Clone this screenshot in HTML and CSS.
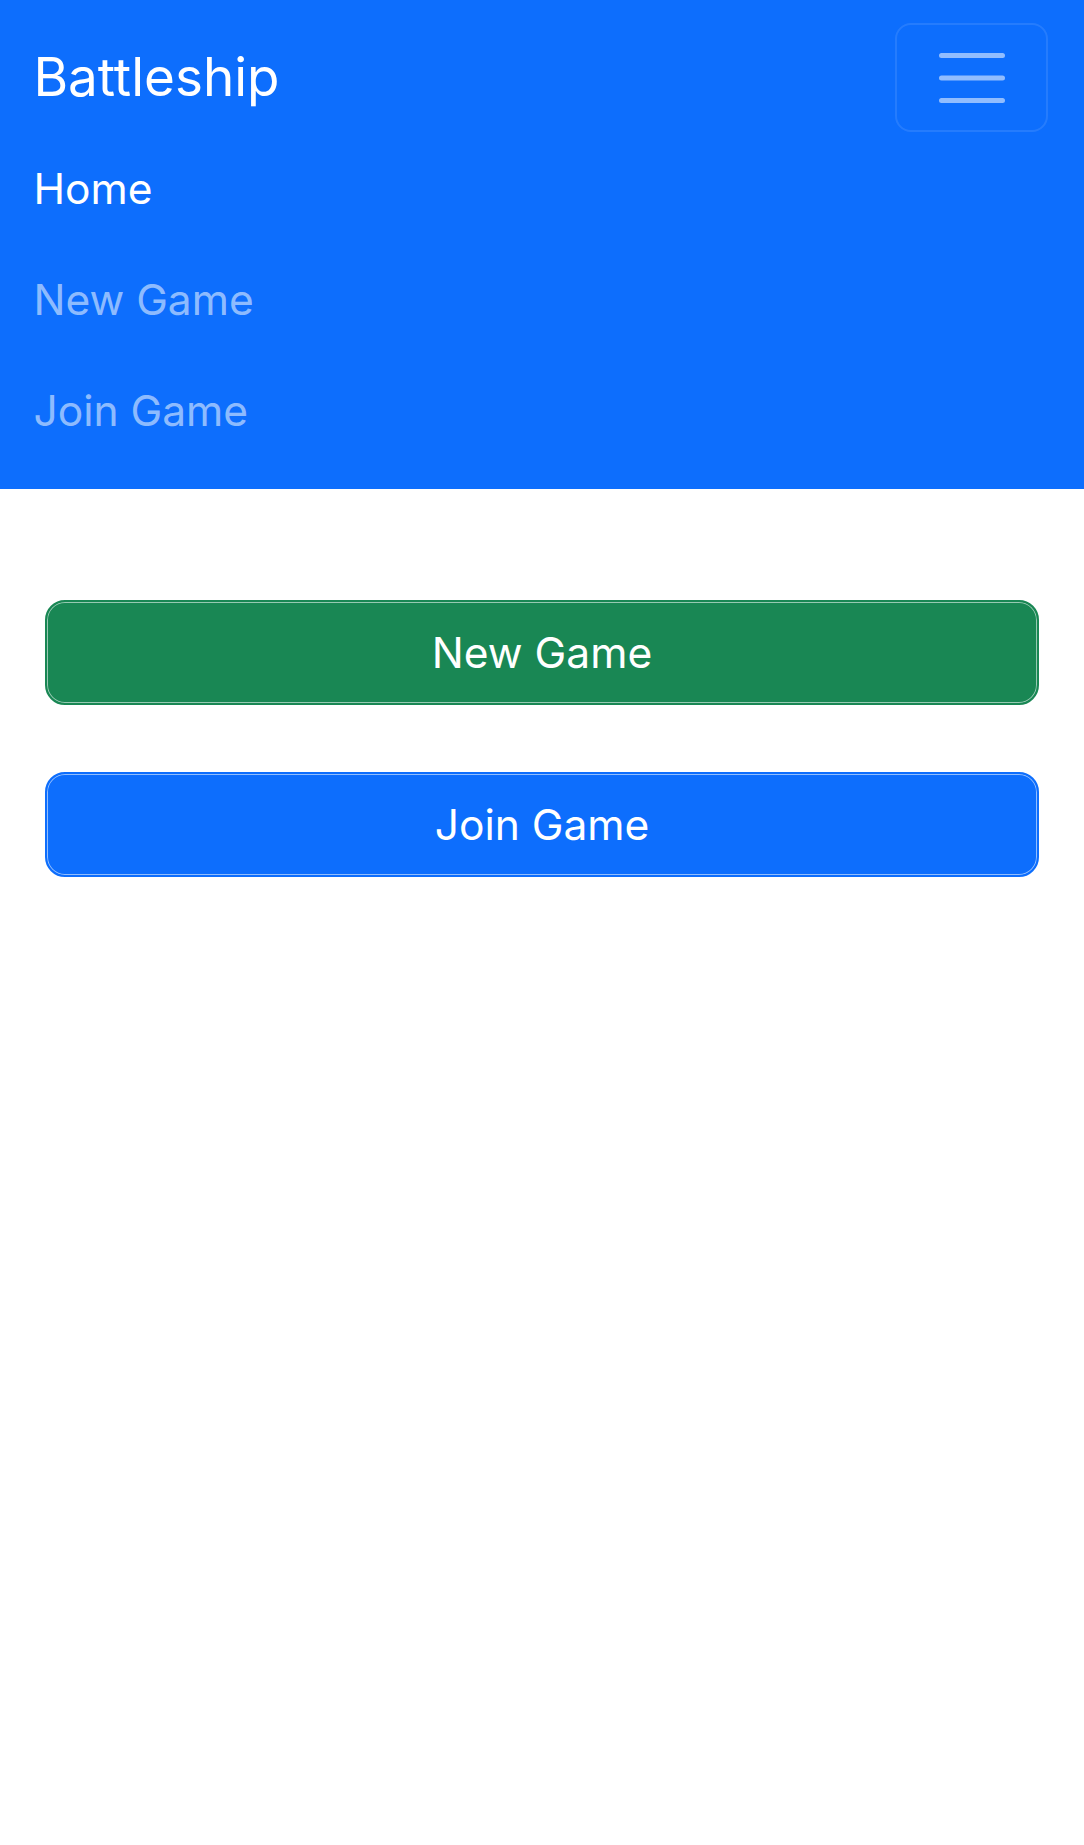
FILE: index.html
```html
<!DOCTYPE html>
<html lang="en">
<head>
<meta charset="utf-8">
<title>Battleship</title>
<link rel="stylesheet" href="styles.css">
</head>
<body>
<nav class="navbar">
  <div class="nav-top">
    <a class="brand" href="#">Battleship</a>
    <button class="toggler" type="button" aria-label="Toggle navigation">
      <svg class="toggler-icon" width="66" height="50" viewBox="0 0 66 50">
        <path d="M2.5 2.5H63.5M2.5 25H63.5M2.5 47.5H63.5" stroke="rgba(255,255,255,0.55)" stroke-width="5" stroke-linecap="round" fill="none"/>
      </svg>
    </button>
  </div>
  <ul class="nav-links">
    <li><a class="nav-link active" href="#">Home</a></li>
    <li><a class="nav-link" href="#">New Game</a></li>
    <li><a class="nav-link" href="#">Join Game</a></li>
  </ul>
</nav>
<main class="content">
  <a class="btn btn-green" href="#">New Game</a>
  <a class="btn btn-blue" href="#">Join Game</a>
</main>
</body>
</html>
```

FILE: styles.css
```css
* {
  box-sizing: border-box;
}

html, body {
  margin: 0;
  padding: 0;
  background: #ffffff;
}

body {
  font-family: Inter, "Noto Sans", "Liberation Sans", sans-serif;
  color: #212529;
}

.navbar {
  background: #0d6efd;
  padding: 22.2px 36px 22.2px 33.4px;
}

.nav-top {
  display: flex;
  justify-content: space-between;
  align-items: center;
  height: 111.2px;
}

.brand {
  color: #ffffff;
  text-decoration: none;
  font-size: 53px;
  line-height: 83.4px;
  padding: 13.9px 0;
}

.toggler {
  width: 153px;
  height: 109px;
  padding: 0;
  margin: 0;
  background: transparent;
  border: 2.5px solid rgba(255, 255, 255, 0.1);
  border-radius: 16px;
  display: flex;
  align-items: center;
  justify-content: center;
}

.toggler-icon {
  display: block;
}

.nav-links {
  list-style: none;
  margin: 0;
  padding: 0;
}

.nav-link {
  display: block;
  padding: 22.2px 0;
  font-size: 42.5px;
  line-height: 66.7px;
  color: rgba(255, 255, 255, 0.55);
  text-decoration: none;
}

.nav-link.active {
  color: #ffffff;
}

.content {
  padding: 111px 45px 0;
  display: flex;
  flex-direction: column;
  gap: 67px;
}

.btn {
  display: flex;
  align-items: center;
  justify-content: center;
  height: 105px;
  border-radius: 20px;
  font-size: 42.5px;
  color: #ffffff;
  text-decoration: none;
  border: 2px solid transparent;
  box-shadow: inset 0 0 0 1px rgba(255, 255, 255, 0.55);
}

.btn-green {
  background: #198754;
  border-color: #198754;
}

.btn-blue {
  background: #0d6efd;
  border-color: #0d6efd;
}
```
